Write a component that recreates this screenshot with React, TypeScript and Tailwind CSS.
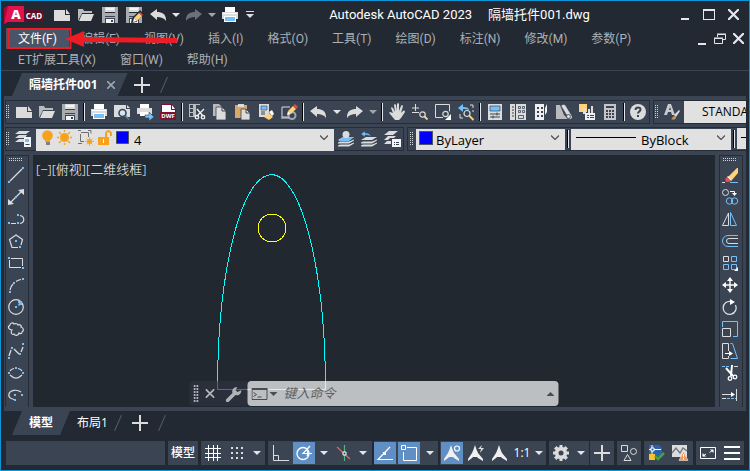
import type { ReactNode } from "react";
import clsx from "clsx";

const L = "#dcdcdc";
const B = "#74c0fc";
const Y = "#ffd27a";
const D = "#3b4453";

const floppy = (
  <>
    <path d="M0 0h3v6h10V0h3v16H0z" fill="#a8abb0" />
    <path d="M3 0h10v5H3z" fill={L} />
    <path d="M4 1h8v2H4z" fill="#f4f4f4" />
    <path d="M3 9h10v1H3z" fill={D} />
    <path d="M3 11h10v5H3z" fill={D} />
    <path d="M4 12h8v4H4z" fill="#f4f4f4" />
    <path d="M9 13h2v2H9z" fill={D} />
  </>
);

const printer = (
  <>
    <path d="M3 0h10v5H3z" fill="#fff" />
    <path d="M0 5h16v7h-2V9H2v3H0z" fill={L} />
    <path d="M1 6h14v1H1z" fill="#fff" />
    <path d="M2 9h12v6H2z" fill="#fff" />
    <path d="M3 10h10v4H3z" fill={B} />
  </>
);

const scissors = (
  <g stroke="#f0f0f0" fill="none" strokeWidth="1.4">
    <path d="M8 5l6 7M15 5l-7 7" />
    <circle cx="14" cy="13.2" r="1.7" />
    <circle cx="8" cy="13.2" r="1.7" />
  </g>
);

const layers = (
  <path d="M5 6h11l-5 3H0zM0 11.500l2-1h9l5-2v1l-5 3H0zM0 14.500l2-1h9l5-2v1l-5 3H0z" fill={L} />
);

const annotative = (
  <path d="M7 0c1 3 2 6 3 8l5 6v2l-5-3-1-1H5l-1 1-4 3v-2l4-6c1-2 2-5 3-8z" fill="#f0f0f0" />
);

const glyphs: Record<string, ReactNode> = {
  new: (
    <>
      <path d="M0 3h11v5h5v6H0z" fill={L} />
      <path d="M12 2l4 5h-4z" fill={L} />
    </>
  ),
  open: (
    <>
      <path d="M0 14V2h5l1 2h8v2H4z" fill="#b9bbbe" />
      <path d="M4 7h12l-3 7H1z" fill={L} />
    </>
  ),
  save: floppy,
  saveAs: (
    <>
      {floppy}
      <path d="M5 16l1-5 8-8 4 4-8 8z" fill="#222933" />
      <path d="M8 11l5-5 3 3-5 5z" fill={Y} />
      <path d="M13 6l1-1 3 3-1 1z" fill="#e04a4a" />
      <path d="M7 15l1-4 3 3z" fill="#fff" />
    </>
  ),
  undo: <path d="M0 7l7-5v3c5 0 9 2 9 8v1c-2-3-5-4-9-4v3z" fill={L} />,
  redo: <path d="M16 7L9 2v3C4 5 0 7 0 13v1c2-3 5-4 9-4v3z" fill={L} />,
  print: printer,
  preview: (
    <>
      <path d="M0 1h12v4h4v8H0z" fill={L} />
      <path d="M13 1l3 3h-3z" fill={L} />
      <circle cx="8.500" cy="9" r="3.500" fill="#cfe6f7" stroke={D} strokeWidth="1.600" />
      <path d="M11 12l4 4" stroke={D} strokeWidth="2.400" />
      <path d="M11.500 12l3.500 3.500" stroke={B} strokeWidth="1" />
    </>
  ),
  plot: (
    <>
      <path d="M3 0h9v4H3z" fill="#fff" />
      <path d="M0 4h15v6H0z" fill={L} />
      <path d="M3 8h9v4H3z" fill="#fff" />
      <path d="M8 11h4V8l5 5-5 4v-3H8z" fill={B} stroke={D} strokeWidth=".6" />
    </>
  ),
  dwf: (
    <>
      <path d="M1 0h11l4 5v11H1z" fill="#7d1230" />
      <path d="M2 1h9v5h4v2H2z" fill="#fff" />
      <path d="M12 1l3 4h-3z" fill="#fff" />
      <path d="M0 8h16v7H0z" fill="#7d1230" />
      <text x="8" y="13.5" fontSize="6" fontWeight="700" textAnchor="middle" fill="#fff">
        DWF
      </text>
    </>
  ),
  cut: (
    <>
      <path d="M0 0h11v1H0zM0 4h7v1H0zM0 8h7v1H0zM0 12h5v1H0zM0 0h1v13H0zM4 1h3v12H4z" fill="#b9bbbe" />
      {scissors}
    </>
  ),
  copy: (
    <>
      <path d="M1 0h6l3 3v9H1z" fill="#b9bbbe" />
      <path d="M4 3h6l4 4v9H4z" fill={L} stroke={D} strokeWidth=".8" />
      <path d="M10 3v4h4" stroke={D} fill="none" />
    </>
  ),
  paste: (
    <>
      <path d="M0 1h12v13H0z" fill="#d9a866" />
      <path d="M3 0h6v3H3z" fill={L} />
      <path d="M6 5h5l4 4v7H6z" fill={L} stroke={D} strokeWidth=".8" />
      <path d="M11 5v4h4" stroke={D} fill="none" />
    </>
  ),
  match: (
    <>
      <path d="M1 0h10v13H1z" fill={L} />
      <path d="M3 2h6v4H3z" fill={B} stroke={D} strokeWidth=".6" />
      <path d="M3 8h4M3 10h4" stroke={D} />
      <path d="M6 13l5-4 4 4-4 3z" fill={Y} />
      <path d="M11 8l3-2 2 4-2 2z" fill="#fff" />
    </>
  ),
  blockEdit: (
    <>
      <path d="M9 3H1v10h6" fill="none" stroke={L} />
      <circle cx="11" cy="11.5" r="3.5" fill="none" stroke="#a0a8b4" strokeWidth="2" />
      <path d="M6 11l1-4 3 3z" fill="#fff" />
      <path d="M7 7l5-5 3 3-5 5z" fill={Y} />
      <path d="M12 2l2-2 3 3-2 2z" fill="#e04a4a" />
      <path d="M0 14h8" stroke={L} />
    </>
  ),
  hand: (
    <path
      d="M4 9L2 4c0-1 1-1 2 0l2 4L5 1c0-1 2-1 2 0l1 6V0c0-1 2-1 2 0v7l2-5c0-1 2-1 2 0l-2 7 2-2c1-1 2 0 2 1l-4 6-2 2H6l-5-6c-1-1-1-2 0-2z"
      fill={L}
    />
  ),
  zoomRt: (
    <>
      <path d="M0 4h7M3.5 0v7M0 8.5h7" stroke={L} />
      <circle cx="10.5" cy="10.5" r="2.7" fill="none" stroke={L} strokeWidth="1.2" />
      <path d="M12.5 12.5l3 3" stroke={Y} strokeWidth="1.8" />
    </>
  ),
  zoomWin: (
    <>
      <path d="M8 13.500H.500v-13h14v7" fill="none" stroke={L} />
      <circle cx="10.5" cy="10" r="2.7" fill="none" stroke={L} strokeWidth="1.2" />
      <path d="M16 10v6h-6z" fill="#fff" />
    </>
  ),
  zoomPrev: (
    <>
      <path d="M0 4l5-4v3c4 0 6 1 6 3-2-1-4-1-6-1v3z" fill={B} />
      <path d="M12 1h3v3M2 10v4h3M15 8V6" fill="none" stroke={L} />
      <circle cx="9" cy="9.5" r="3" fill="none" stroke={L} strokeWidth="1.2" />
      <path d="M11.5 12l4 4" stroke={Y} strokeWidth="1.8" />
    </>
  ),
  props: (
    <>
      <path d="M1 0h14v16H1z" fill={L} />
      <path d="M3 2h10v5H3z" fill={B} stroke={D} strokeWidth=".7" />
      <path d="M3 10h10M3 13h10M10 8.5v3M6 11.5v3" stroke={D} />
    </>
  ),
  designCenter: (
    <>
      <path d="M0 0h5v16H0zM6 0h10v16H6z" fill={L} />
      <path d="M2 3h2M2 6h2M2 9h2M2 12h2" stroke={D} />
      <path
        d="M8.500 2.500h2v2h-2zM12.500 2.500h2v2h-2zM8.500 6.500h2v2h-2zM12.500 6.500h2v2h-2zM8.500 11.500h5v3h-5z"
        fill="none"
        stroke={D}
        strokeWidth=".8"
      />
    </>
  ),
  palettes: (
    <>
      <path d="M2 0h9v16H2zM12 4l2-4v8l-2 3z" fill="#f0f0f0" />
      <path d="M4 3h2v2H4zM8 3h2v2H8zM4 7h2v2H4zM8 7h2v2H8zM4 11h2v2H4zM8 11h2v2H8z" fill={D} />
    </>
  ),
  sheetSet: (
    <>
      <path d="M0 1h4l4 10 4 4H0z" fill="#b9bbbe" />
      <path d="M5 2c1-2 4-2 5 0l6 10c1 2-1 4-3 3z" fill={L} stroke={D} strokeWidth=".7" />
      <circle cx="12.500" cy="12.500" r="2" fill={L} stroke={D} strokeWidth=".8" />
    </>
  ),
  markup: (
    <>
      <path d="M0 0h8v8H0z" fill={Y} />
      <path d="M4 4h3v6H4zM9 5h2v5H9zM12 2h2v8h-2z" fill={L} />
      <path d="M6 9h10v7H6z" fill="#f0f0f0" />
      <path d="M8 11.500h2M11 11.500h4M8 13.500h2M11 13.500h4" stroke={D} />
    </>
  ),
  calc: (
    <>
      <path d="M2 0h12v16H2z" fill="#c4c6c9" />
      <path
        d="M4 2h8v2H4zM4 6h2v2H4zM7 6h2v2H7zM10 6h2v2h-2zM4 9h2v2H4zM7 9h2v2H7zM10 9h2v2h-2zM4 12h2v2H4zM7 12h2v2H7zM10 12h2v2h-2z"
        fill={D}
      />
    </>
  ),
  help: (
    <>
      <circle cx="8" cy="8" r="8" fill={L} />
      <path d="M5.500 6c0-3.500 5-3 5-.5 0 2-2.500 2-2.500 4M8 11v2" fill="none" stroke={D} strokeWidth="2" />
    </>
  ),
  textStyle: (
    <>
      <path d="M0 11L4 0h3l4 11H8L7 8H4l-1 3zM5 6h2L6 3z" fill="#c9cbce" />
      <path d="M10 11l5-5 1 1-4 6z" fill={L} />
      <path d="M7 15c2 0 1-3 4-3l1 1c0 3-3 3-5 2z" fill="#c99a5b" />
    </>
  ),
  layerProps: (
    <>
      <path d="M4 0h11l-4 3H0zM4 4h8l-2 3H0zM4 8h5v3H0z" fill={L} />
      <path d="M9 6h7v10H9z" fill="#f4f4f4" />
      <path d="M10 8h4v3h-4z" fill={B} />
      <path d="M10.500 13.500h4" stroke={D} />
    </>
  ),
  layerCurrent: (
    <>
      {layers}
      <path d="M5 6h11l-5 4H0z" fill={B} />
      <circle cx="8" cy="3.500" r="3.500" fill={L} />
    </>
  ),
  layerPrev: (
    <>
      {layers}
      <path d="M0 3l4-3v2c4 0 5 1 6 4-2-2-4-2-6-2v2z" fill={B} stroke={D} strokeWidth=".5" />
    </>
  ),
  layerStates: (
    <>
      <path d="M5 0h9l-5 4H0zM4 5h8l-2 2H6L4 9H0zM3 10h4v3H0z" fill={L} />
      <path d="M8 8h9v8H8z" fill="#f4f4f4" />
      <path d="M10 11.500h1M12 11.500h3M10 13.500h1M12 13.500h3" stroke={D} />
    </>
  ),
  line: (
    <>
      <path d="M2 14L14 2" stroke={L} strokeWidth="1.200" />
      <path d="M0 14h2v2H0zM14 0h2v2h-2z" fill={B} />
    </>
  ),
  xline: (
    <>
      <path d="M2 14L14 2" stroke={L} strokeWidth="1.200" />
      <path d="M16 0v6l-6-5zM0 16v-6l6 5z" fill={L} />
      <path d="M7 7h2v2H7z" fill={B} />
    </>
  ),
  pline: (
    <>
      <path d="M3 12.500h5M12 4.500c5 1 5 7 0 8" fill="none" stroke={L} strokeWidth="1.200" />
      <path d="M0 11h2v2H0zM9 11h2v2H9zM9 3h2v2H9z" fill={B} />
    </>
  ),
  polygon: (
    <>
      <path d="M10 14.500H4L1.500 6.500 8 2l6.500 4.500L13 12" fill="none" stroke={L} strokeWidth="1.200" />
      <path d="M7 7h2v2H7zM11 13h2v2h-2z" fill={B} />
    </>
  ),
  rect: (
    <>
      <path d="M3 3.500h11.500V11M1.500 5v7.500H13" fill="none" stroke={L} />
      <path d="M0 2h2v2H0zM14 12h2v2h-2z" fill={B} />
    </>
  ),
  arc: (
    <>
      <path d="M2 13Q3 9 5 7M8 4.500Q10 3 13 2.500" fill="none" stroke={L} strokeWidth="1.200" />
      <path d="M14 1h2v2h-2zM5 5h2v2H5zM1 14h2v2H1z" fill={B} />
    </>
  ),
  circle: (
    <>
      <circle cx="8" cy="8" r="7.300" fill="none" stroke={L} strokeWidth="1.200" />
      <path d="M7 7h2v2H7zM10 2h4v4h-2L11 7l-1-1 1-2h-1z" fill={B} />
    </>
  ),
  cloud: (
    <path
      d="M4 9c-3 0-5-3-2-5 0-2 3-3 4-1 2-1 4 0 4 1 2-1 4 1 3 2 3 1 3 4 1 5 0 2-2 2-3 1-1 3-4 3-5 1-2 1-4-1-2-4z"
      fill="none"
      stroke={L}
      strokeWidth="1.200"
    />
  ),
  spline: (
    <>
      <path d="M1 13l2-6M6 6l5 5M13 9l2-5" fill="none" stroke={L} strokeWidth="1.300" />
      <path d="M0 14h2v2H0zM3 4h2v2H3zM11 10h2v2h-2zM14 0h2v2h-2z" fill={B} />
    </>
  ),
  ellipse: (
    <>
      <path d="M2 6Q3 4 6 3.500M10 3.500Q13 4 14 6M2 10q6 6 12 0" fill="none" stroke={L} strokeWidth="1.200" />
      <path d="M0 7h2v2H0zM14 7h2v2h-2zM7 2h2v2H7z" fill={B} />
    </>
  ),
  ellipseArc: (
    <>
      <path d="M13 5C9 2 2 3 1 7s3 5 5 5.500" fill="none" stroke={L} strokeWidth="1.200" />
      <path d="M6 7h2v2H6zM13 7h2v2h-2zM6 12h2v2H6z" fill={B} />
    </>
  ),
  erase: (
    <>
      <path d="M6 10l9-9h1v5l-6 7z" fill={Y} />
      <path d="M5 10l1-1 4 4-1 1z" fill="#fff" />
      <path d="M3 12l2-2 4 4-2 1H4z" fill="#ee4b4b" />
      <path d="M0 15.500h3" stroke={L} />
      <path d="M8 15.500h8" stroke={B} />
    </>
  ),
  copyObj: (
    <>
      <circle cx="3.500" cy="3.500" r="3" fill="none" stroke={L} />
      <path d="M8 2.500h4.500V5" fill="none" stroke="#fff" />
      <path d="M10 4h5l-2.500 3z" fill="#fff" />
      <circle cx="7.500" cy="12" r="3.200" fill="none" stroke={B} />
      <circle cx="12.500" cy="12" r="3.200" fill="none" stroke={B} />
    </>
  ),
  mirror: (
    <>
      <path d="M6.500 2v12.500h-6z" fill="none" stroke={L} />
      <path d="M8.500 1.500v13h6z" fill="none" stroke={B} />
    </>
  ),
  offset: (
    <>
      <path d="M16 2.500H6a5.500 5.500 0 0 0 0 11h10" fill="none" stroke={B} />
      <path d="M16 5.500H7a2.500 2.500 0 0 0 0 5h9" fill="none" stroke={L} />
    </>
  ),
  array: (
    <>
      <path d="M1.500 1.500h5v5h-5z" fill="none" stroke={L} />
      <path d="M9.500 1.500h5v5h-5zM1.500 9.500h5v5h-5zM9.500 9.500h5v5h-5z" fill="none" stroke={B} />
      <path d="M16 12v4h-4z" fill="#fff" />
    </>
  ),
  move: (
    <>
      <path d="M8 2v12M2 8h12" stroke="#fff" strokeWidth="1.400" />
      <path d="M8 0l3 4H5zM8 16l3-4H5zM0 8l4-3v6zM16 8l-4-3v6z" fill="#fff" />
    </>
  ),
  rotate: (
    <>
      <path d="M9 2.500A6.500 6.500 0 1 0 13.500 6" fill="none" stroke={L} strokeWidth="1.300" />
      <path d="M8 0l5 3-5 3z" fill="#fff" />
    </>
  ),
  scale: (
    <>
      <path d="M.5 6V.5h15v15H11" fill="none" stroke={B} />
      <path d="M.5 7.500h8v8h-8z" fill="none" stroke={L} />
    </>
  ),
  stretch: (
    <>
      <path d="M6.500 8V.5h-6v15h6V13" fill="none" stroke={L} />
      <path d="M8.500.5h2l5 15h-7" fill="none" stroke={B} />
      <path d="M3 10.500h5" stroke="#fff" />
      <path d="M7 8l4 2.500L7 13z" fill="#fff" />
    </>
  ),
  trim: (
    <>
      <path d="M0 1.500h7" stroke={B} strokeDasharray="3 1" />
      <path d="M12 1.500h4" stroke={L} />
      <path d="M4 3l7 8M10 0L9 11" stroke="#fff" strokeWidth="2" fill="none" />
      <circle cx="8" cy="13.500" r="1.800" fill="none" stroke="#fff" strokeWidth="1.300" />
      <circle cx="13" cy="12" r="1.800" fill="none" stroke="#fff" strokeWidth="1.300" />
    </>
  ),
  extend: (
    <>
      <path d="M14.500 2v12M0 7.500h10M0 11.500h4" stroke={L} />
      <path d="M9 5l4 2.500L9 10z" fill="#fff" />
      <path d="M5 11.500h9" stroke={B} strokeDasharray="3 1" />
    </>
  ),
  grid: <path d="M3.500 0v16M8.500 0v16M12.500 0v16M0 3.500h16M0 8.500h16M0 12.500h16" stroke="#fff" />,
  snap: (
    <path
      d="M2 2h2v2H2zM7 2h2v2H7zM12 2h2v2h-2zM2 7h2v2H2zM7 7h2v2H7zM12 7h2v2h-2zM2 12h2v2H2zM7 12h2v2H7zM12 12h2v2h-2z"
      fill={L}
    />
  ),
  ortho: <path d="M.5 0v15.500H16M.5 10.500h5v5" fill="none" stroke={L} />,
  polar: (
    <>
      <circle cx="7" cy="8.500" r="6" fill="none" stroke="#fff" strokeWidth="1.300" />
      <path d="M16 8.500H7L14 1M11 5.500q2 3 0 5.500" fill="none" stroke="#fff" strokeWidth="1.200" />
    </>
  ),
  iso: (
    <>
      <path d="M1 2l13 12" stroke="#d46a6a" strokeWidth="1.200" />
      <path d="M8.500 0v16" stroke="#49b87a" strokeWidth="1.200" />
      <path d="M7 7h3v3H7z" fill={D} stroke="#fff" />
    </>
  ),
  otrack: (
    <>
      <path d="M16 14.500H1L13 2" fill="none" stroke="#fff" strokeWidth="1.200" />
      <path d="M6 7h3v3H6z" fill="#fff" />
    </>
  ),
  osnap: (
    <>
      <path d="M6 2.500h9.500v13h-13V7" fill="none" stroke="#fff" />
      <path d="M.5.5h4v4h-4z" fill="none" stroke="#fff" />
    </>
  ),
  annoVis: (
    <>
      {annotative}
      <circle cx="13" cy="3.500" r="2.500" fill="none" stroke="#fff" strokeWidth="1.200" />
    </>
  ),
  annoAuto: (
    <>
      {annotative}
      <path d="M14 0l-4 4h3l-1 4 4-5h-3z" fill={L} />
    </>
  ),
  annoScale: annotative,
  gear: (
    <>
      <path
        d="M6.500 0h3v2l1.500.6L12.500 1 15 3.500 13.400 5l.6 1.500h2v3h-2l-.6 1.500 1.600 1.500-2.500 2.500-1.500-1.600-1.500.6v2h-3v-2L5 13.400 3.500 15 1 12.500 2.600 11 2 9.500H0v-3h2L2.600 5 1 3.500 3.500 1 5 2.600 6.500 2z"
        fill={L}
      />
      <circle cx="8" cy="8" r="2.500" fill={D} />
    </>
  ),
  plus: <path d="M8 0v16M0 8h16" stroke={L} strokeWidth="2" />,
  isolate: (
    <>
      <path d="M.5.5h6v6h-6zM6.500 9.500l3.500 6H3z" fill="none" stroke={L} />
      <circle cx="12.500" cy="6.500" r="3" fill="none" stroke={L} />
    </>
  ),
  hardware: (
    <>
      <path d="M0 0h10l3 3v8H0z" fill="#2b62a8" />
      <path d="M3 0v11M0 4.500h12" stroke="#fff" />
      <path d="M2 3h3v3H2z" fill="#2b62a8" stroke="#fff" />
      <path d="M0 9h6v6H0z" fill="#fdc12d" />
      <path d="M6 11l3 3 6-6" fill="none" stroke="#43a047" strokeWidth="2.600" />
    </>
  ),
  performance: (
    <>
      <path d="M0 0h15v12H0z" fill={L} />
      <path d="M0 8l4-5 4 5 3-5 4 3" fill="none" stroke="#6d7683" strokeWidth="1.300" />
      <path d="M11.500 6l4.500 9.500H7z" fill="#f0965a" stroke="#fff" strokeWidth=".5" />
      <path d="M11.500 9v3M11.500 13v1.500" stroke="#fff" />
    </>
  ),
  cleanScreen: (
    <>
      <path d="M.5 2.500h15v11H.5z" fill="none" stroke="#fff" />
      <path d="M10 4.500h3.500V8zM2.500 8v3.500H6z" fill="#fff" />
      <path d="M9.500 7.500l3-2M3 11l3-2" stroke="#fff" />
    </>
  ),
  menu: <path d="M0 2h16M0 8h16M0 14h16" stroke="#fff" strokeWidth="2" />,
};

function Glyph({ name, className }: { name: string; className?: string }) {
  return (
    <svg viewBox="0 0 16 16" className={clsx("size-4 shrink-0 overflow-visible", className)} aria-hidden="true">
      {glyphs[name]}
    </svg>
  );
}

function Tool({ name, className }: { name: string; className?: string }) {
  return (
    <button type="button" aria-label={name} className={clsx("flex shrink-0 items-center justify-center", className)}>
      <Glyph name={name} />
    </button>
  );
}

function Caret({ className, dim }: { className?: string; dim?: boolean }) {
  return (
    <button type="button" aria-label="more" className={clsx("flex shrink-0 items-center justify-center", className)}>
      <svg viewBox="0 0 8 4" className="h-1 w-2" aria-hidden="true">
        <path d="M0 0h8L4 4z" fill={dim ? "#a0a5ad" : "#e4e4e4"} />
      </svg>
    </button>
  );
}

function Grip({ horizontal }: { horizontal?: boolean }) {
  const w = horizontal ? 14 : 4;
  const h = horizontal ? 4 : 14;
  const dots = [];
  for (let x = 0; x < w; x += 2) {
    for (let y = 0; y < h; y += 2) {
      dots.push(<rect key={`${x}-${y}`} x={x} y={y} width="1" height="1" />);
    }
  }
  return (
    <svg width={w} height={h} fill="#d0d3d8" className="shrink-0" aria-hidden="true">
      {dots}
    </svg>
  );
}

function Divider() {
  return (
    <span className="flex w-1.5 shrink-0 justify-center">
      <span className="h-[18px] w-0.5 border-r border-l border-r-gray-200 border-l-black" />
    </span>
  );
}

function Chevron() {
  return (
    <svg viewBox="0 0 8 5" className="pointer-events-none absolute top-2 right-1.5 h-[5px] w-2" aria-hidden="true">
      <path d="M0 .5l4 4 4-4" fill="none" stroke="#555" strokeWidth="1.300" />
    </svg>
  );
}

function Cross({ className }: { className?: string }) {
  return (
    <svg viewBox="0 0 10 10" className={className} aria-hidden="true">
      <path d="M0 0l10 10M10 0L0 10" stroke="currentColor" strokeWidth="2" />
    </svg>
  );
}

function TabSlash() {
  return (
    <svg viewBox="0 0 8 16" className="h-4 w-2 shrink-0" aria-hidden="true">
      <path d="M7.500 0l-7 16" stroke="#4d5765" strokeWidth="1.200" />
    </svg>
  );
}

function TitleBar() {
  return (
    <header className="flex h-[27px] shrink-0 items-center pl-[3px]">
      <svg viewBox="0 0 40 18" className="h-[18px] w-10 shrink-0" role="img" aria-label="AutoCAD">
        <path d="M0 2l4-2v15l-4 3z" fill="#a8083a" />
        <path d="M4 0h16v16H4l-4 2z" fill="#e2124f" />
        <path d="M20 4h20v12H20z" fill="#5c0f29" />
        <text x="12" y="13" fontSize="13" fontWeight="800" textAnchor="middle" fill="#fff">
          A
        </text>
        <text x="30" y="13" fontSize="8" fontWeight="700" textAnchor="middle" fill="#fff">
          CAD
        </text>
      </svg>
      <div className="ml-1.5 flex h-full shrink-0">
        {["new", "open", "save", "saveAs", "undo"].map((n) => (
          <Tool key={n} name={n} className="w-6" />
        ))}
        <Caret className="w-3" />
        <Tool name="redo" className="w-6 opacity-40" />
        <Caret className="w-3" dim />
        <Tool name="print" className="w-6" />
        <button type="button" aria-label="customize" className="flex w-4 items-center justify-center">
          <svg viewBox="0 0 8 7" className="h-[7px] w-2">
            <path d="M0 0h8v1H0zM0 3h8L4 7z" fill={L} />
          </svg>
        </button>
      </div>
      <h1 className="flex min-w-0 flex-1 justify-center gap-4 pr-3 font-['Roboto','Noto_Sans_CJK_SC',sans-serif] text-[13px] whitespace-nowrap text-white">
        <span>Autodesk AutoCAD 2023</span>
        <span>隔墙托件001.dwg</span>
      </h1>
      <div className="mr-1 flex h-full shrink-0 text-gray-200">
        <button type="button" aria-label="minimize" className="flex w-6 items-end justify-center pb-2">
          <span className="h-0.5 w-2 bg-current" />
        </button>
        <button type="button" aria-label="maximize" className="flex w-6 items-center justify-center">
          <span className="h-[11px] w-3 border border-t-2 border-current" />
        </button>
        <button type="button" aria-label="close" className="flex w-6 items-center justify-center">
          <Cross className="size-[11px]" />
        </button>
      </div>
    </header>
  );
}

const menus = [
  "文件(F)",
  "编辑(E)",
  "视图(V)",
  "插入(I)",
  "格式(O)",
  "工具(T)",
  "绘图(D)",
  "标注(N)",
  "修改(M)",
  "参数(P)",
  "ET扩展工具(X)",
  "窗口(W)",
  "帮助(H)",
];

function MenuBar() {
  return (
    <nav className="relative flex shrink-0 border-b border-[#3b4453] pl-[5px]">
      <ul className="flex min-w-0 flex-1 flex-wrap font-['Roboto','Noto_Sans_CJK_SC',sans-serif] text-[12px] text-[#adb1b6]">
        {menus.map((m, i) => (
          <li key={m}>
            <button type="button" className={clsx("block h-[21px] px-3", i === 0 && "bg-[#4a5467] text-white")}>
              {m}
            </button>
          </li>
        ))}
      </ul>
      <div className="mr-0.5 flex h-[21px] shrink-0 text-gray-200">
        <button type="button" aria-label="minimize drawing" className="flex w-[18px] items-end justify-center pb-1">
          <span className="h-0.5 w-2 bg-current" />
        </button>
        <button type="button" aria-label="restore drawing" className="flex w-[18px] items-center justify-center">
          <svg viewBox="0 0 12 11" className="h-[11px] w-3" fill="none" stroke="currentColor">
            <path d="M3.500 4V1.500h8v5H9M3 1h9M.5 5.500h8v5h-8zM0 5h9" />
          </svg>
        </button>
        <button type="button" aria-label="close drawing" className="flex w-[18px] items-center justify-center">
          <Cross className="size-[11px]" />
        </button>
      </div>
      {/* callout on the file menu */}
      <svg viewBox="0 0 180 24" className="pointer-events-none absolute -top-px left-0 h-6 w-[180px]" aria-hidden="true">
        <path d="M7.500 2h62v19h-62z" fill="none" stroke="#ee1c25" strokeWidth="2" />
        <path d="M64 12l19-8v6l92 1q3 2 0 5l-92-1v5z" fill="#ee1c25" />
      </svg>
    </nav>
  );
}

const slant = "[clip-path:polygon(10px_0,100%_0,calc(100%-10px)_100%,0_100%)]";

function FileTabs() {
  return (
    <div className="flex h-[25px] shrink-0 items-end pl-[11px]">
      <div className={clsx("flex h-[23px] items-center bg-[#3b4453] pr-3 pl-[17px] text-white", slant)}>
        <button type="button" className="text-[12px] font-bold">
          隔墙托件001
        </button>
        <button type="button" aria-label="close tab" className="ml-2 p-px text-[#a0a5ad]">
          <Cross className="size-2" />
        </button>
      </div>
      <div className="flex h-[23px] items-center gap-2.5 pl-1.5">
        <button type="button" aria-label="new tab" className="flex">
          <Glyph name="plus" className="size-3" />
        </button>
        <TabSlash />
      </div>
    </div>
  );
}

const bar = "flex h-6 shrink-0 items-center border border-[#262d38]";
const field = "h-[22px] w-full appearance-none rounded-none bg-[#e1e1e1] text-black outline-none";

function StandardToolbar() {
  const groups = [
    ["new", "open", "save"],
    ["print", "preview", "plot", "dwf"],
    ["cut", "copy", "paste", "match", "blockEdit"],
  ];
  return (
    <div className="flex gap-[3px]">
      <div className={bar}>
        <Grip />
        <div className="ml-0.5 flex items-center">
          {groups.map((g) => (
            <div key={g[0]} className="flex items-center">
              {g.map((n) => (
                <Tool key={n} name={n} className="w-[23px]" />
              ))}
              <Divider />
            </div>
          ))}
          <Tool name="undo" className="w-6" />
          <Caret className="w-[13px]" />
          <Tool name="redo" className="w-[23px]" />
          <Caret className="w-[13px]" dim />
          <Divider />
          {["hand", "zoomRt", "zoomWin", "zoomPrev"].map((n) => (
            <Tool key={n} name={n} className="w-[23px]" />
          ))}
          <Divider />
          {["props", "designCenter", "palettes", "sheetSet", "markup", "calc"].map((n) => (
            <Tool key={n} name={n} className="w-[23px]" />
          ))}
          <Divider />
          <Tool name="help" className="w-[22px]" />
        </div>
      </div>
      <div className={clsx(bar, "min-w-0 flex-1 overflow-hidden border-r-0 pl-px")}>
        <Grip />
        <Tool name="textStyle" className="w-[25px]" />
        <select aria-label="text style" className={clsx(field, "min-w-0 flex-1 pl-[18px] text-[12px]")}>
          <option>STANDARD</option>
        </select>
      </div>
    </div>
  );
}

function LayerToolbar() {
  return (
    <div className="mt-[3px] flex gap-[3px]">
      <div className={clsx(bar, "min-w-0 flex-1")}>
        <Grip />
        <Tool name="layerProps" className="w-[26px]" />
        <div className="relative min-w-0 flex-1">
          <select aria-label="layer" className={clsx(field, "pl-[98px] text-[13px]")}>
            <option>4</option>
          </select>
          <svg viewBox="0 0 90 16" className="pointer-events-none absolute top-[3px] left-1.5 h-4 w-[90px]" aria-hidden="true">
            <circle cx="5.500" cy="5.500" r="5.300" fill="#f9a11b" />
            <path d="M3 9h5v3H3z" fill="#f9a11b" />
            <path d="M4 12h4v3H4z" fill="#808080" />
            <circle cx="22.500" cy="7.500" r="4.500" fill="#f9a11b" />
            <path
              d="M22.500 0v2M22.500 13v2M15 7.500h2M28 7.500h2M17 2l2 2M28 2l-2 2M17 13l2-2M28 13l-2-2"
              stroke="#f9a11b"
              strokeWidth="1.400"
            />
            <path d="M39 2.500h7.500V7M38.500 4v7.500H42M36 .5h3M46 .5h3v3M36 13.500h4" fill="none" stroke="#707070" />
            <circle cx="47.500" cy="11.500" r="2.500" fill="#f9a11b" />
            <path d="M47.500 7v9M43 11.500h9M44.500 8.500l6 6M50.500 8.500l-6 6" stroke="#f9a11b" strokeWidth=".8" />
            <path d="M56 7h11v8H56z" fill="#f9a11b" />
            <path d="M64 7V3q2-4 5 0v3" fill="none" stroke="#f9a11b" strokeWidth="2" />
            <path d="M61 9h1v4h-1z" fill="#fff" />
            <path d="M74.500 1.500h12v12h-12z" fill="#00f" stroke="#555" />
          </svg>
          <Chevron />
        </div>
        {["layerCurrent", "layerPrev", "layerStates"].map((n) => (
          <Tool key={n} name={n} className="w-[23px]" />
        ))}
      </div>
      <div className={clsx(bar, "w-[339px] overflow-hidden border-r-0 pl-0.5")}>
        <Grip />
        <div className="relative ml-0.5 w-[149px] shrink-0">
          <select aria-label="color" className={clsx(field, "pl-5 text-[13px]")}>
            <option>ByLayer</option>
          </select>
          <span className="pointer-events-none absolute top-1 left-[3px] size-3.5 border border-gray-600 bg-[#0000ff]" />
          <Chevron />
        </div>
        <Divider />
        <div className="relative w-[160px] shrink-0">
          <select aria-label="linetype" className={clsx(field, "pl-[70px] text-[13px]")}>
            <option>ByBlock</option>
          </select>
          <span className="pointer-events-none absolute top-2.5 left-[5px] h-px w-[60px] bg-black" />
          <Chevron />
        </div>
        <Divider />
        <div className="relative min-w-0 flex-1">
          <select aria-label="lineweight" className={field}>
            <option label=" " />
          </select>
          <span className="pointer-events-none absolute top-2.5 right-0 left-1 h-px bg-black" />
        </div>
      </div>
    </div>
  );
}

const drawTools = ["line", "xline", "pline", "polygon", "rect", "arc", "circle", "cloud", "spline", "ellipse", "ellipseArc"];
const modifyTools = ["erase", "copyObj", "mirror", "offset", "array", "move", "rotate", "scale", "stretch", "trim", "extend"];

function SideToolbar({ tools }: { tools: string[] }) {
  return (
    <div className="flex w-6 shrink-0 flex-col items-center border border-b-0 border-[#262d38] pr-0.5">
      <div className="flex h-2 items-center">
        <Grip horizontal />
      </div>
      {tools.map((t) => (
        <Tool key={t} name={t} className="h-[22px] w-5" />
      ))}
    </div>
  );
}

function CommandLine() {
  return (
    <div className="absolute bottom-px left-1/2 flex h-[25px] w-[369px] -translate-x-1/2">
      <div className="flex w-[58px] items-center rounded-l-sm bg-[#2f3542]/60 pl-1 text-[#b0b2b5]">
        <svg width="5" height="17" fill="currentColor" aria-hidden="true">
          {[0, 3, 6, 9, 12, 15].map((y) => (
            <path key={y} d={`M0 ${y}h2v2H0zM3 ${y}h2v2H3z`} />
          ))}
        </svg>
        <button type="button" aria-label="close command line" className="ml-[7px]">
          <Cross className="size-[9px]" />
        </button>
        <button type="button" aria-label="customize command line" className="ml-[11px]">
          <svg viewBox="0 0 16 16" className="size-4" aria-hidden="true">
            <path d="M0 14l7-7c-1-3 1-6 5-6L10 4l2 2 4-2c0 4-3 6-6 5l-7 7H1z" fill="currentColor" />
          </svg>
        </button>
      </div>
      <div className="flex min-w-0 flex-1 items-center rounded-sm bg-white/70 px-1">
        <svg viewBox="0 0 26 12" className="h-3 w-[26px] shrink-0" aria-hidden="true">
          <path d="M.5 1h15v10.500H.5z" fill="none" stroke="#4c4c4c" />
          <path d="M0 0h16v2H0z" fill="#4c4c4c" />
          <path d="M2 4.500l3 2-3 2M6 9h4" fill="none" stroke="#4c4c4c" />
          <path d="M18 4h8l-4 4z" fill="#4c4c4c" />
        </svg>
        <input
          aria-label="command"
          placeholder="键入命令"
          className="ml-1.5 min-w-0 flex-1 bg-transparent text-[13px] italic outline-none placeholder:text-[#5f6062]"
        />
        <button type="button" aria-label="history">
          <svg viewBox="0 0 8 4" className="h-1 w-2">
            <path d="M0 4h8L4 0z" fill="#4c4c4c" />
          </svg>
        </button>
      </div>
    </div>
  );
}

function DrawingArea() {
  return (
    <main className="relative mx-1 min-w-0 flex-1 overflow-hidden bg-[#212830]">
      <div className="pt-1.5 pl-[3px] text-[13px] leading-4 font-light text-white">[−][俯视][二维线框]</div>
      <svg className="absolute inset-0 size-full" fill="none" aria-hidden="true">
        <g shapeRendering="crispEdges">
          <path d="M184.500 234.500a54 215 0 0 1 108 0z" stroke="#00ffff" />
          <circle cx="239" cy="73" r="14" stroke="#ffff00" />
        </g>
      </svg>
      <CommandLine />
    </main>
  );
}

function LayoutTabs() {
  return (
    <div className="flex h-[30px] shrink-0 items-start pl-[11px] text-[12px] text-white">
      <button type="button" className={clsx("h-6 bg-[#3b4453] px-[17px] font-bold", slant)}>
        模型
      </button>
      <button type="button" className="ml-[7px] h-6">
        布局1
      </button>
      <div className="ml-1.5 flex h-6 items-center gap-2.5">
        <TabSlash />
        <button type="button" aria-label="new layout" className="flex">
          <Glyph name="plus" className="size-3" />
        </button>
        <TabSlash />
      </div>
    </div>
  );
}

function StatusGroup({ children, className }: { children?: ReactNode; className?: string }) {
  return <div className={clsx("flex h-6 shrink-0 items-center bg-[#3b4453]", className)}>{children}</div>;
}

function StatusBar() {
  const on = "h-[22px] w-[22px] bg-[#5f8fc4]";
  return (
    <footer className="mb-[5px] flex shrink-0 gap-[3px] pr-[5px] pl-[5px] text-[12px] text-white">
      <div className="h-6 min-w-0 flex-1 bg-[#3b4453]" />
      <StatusGroup>
        <button type="button" className="w-[30px] font-medium">
          模型
        </button>
      </StatusGroup>
      <StatusGroup>
        <Tool name="grid" className="w-6" />
        <Tool name="snap" className="w-6" />
        <Caret className="w-4" />
      </StatusGroup>
      <div className="flex shrink-0 gap-0.5">
        <StatusGroup>
          <Tool name="ortho" className="w-[25px]" />
          <Tool name="polar" className={on} />
          <Caret className="w-[18px]" />
          <Tool name="iso" className="w-[21px]" />
          <Caret className="w-[18px]" />
        </StatusGroup>
        <StatusGroup className="gap-0.5">
          <Tool name="otrack" className={on} />
          <Tool name="osnap" className={on} />
          <Caret className="w-4" />
        </StatusGroup>
        <StatusGroup className="pl-px">
          <Tool name="annoVis" className={on} />
          <Tool name="annoAuto" className="w-[25px]" />
          <Tool name="annoScale" className="w-6" />
          <button type="button" className="w-5 text-center">
            1:1
          </button>
          <Caret className="w-[14px]" />
        </StatusGroup>
      </div>
      <div className="flex shrink-0 gap-px">
        <StatusGroup>
          <Tool name="gear" className="w-6" />
          <Caret className="w-4" />
        </StatusGroup>
        <StatusGroup>
          <Tool name="plus" className="w-6" />
        </StatusGroup>
      </div>
      <StatusGroup>
        <Tool name="isolate" className="w-6" />
      </StatusGroup>
      <StatusGroup className="px-px">
        <Tool name="hardware" className="w-[23px]" />
        <Tool name="performance" className="w-6" />
      </StatusGroup>
      <StatusGroup>
        <Tool name="cleanScreen" className="w-6" />
        <Tool name="menu" className="w-6" />
      </StatusGroup>
    </footer>
  );
}

export default function App() {
  return (
    <div className="flex h-screen flex-col overflow-hidden border border-[#0a96d8] bg-[#222933] font-['Open_Sans','Noto_Sans_CJK_SC',sans-serif]">
      <TitleBar />
      <MenuBar />
      <FileTabs />
      <div className="mx-[3px] flex min-h-0 flex-1 flex-col bg-[#3b4453] pt-1 pb-1 pl-px">
        <StandardToolbar />
        <LayerToolbar />
        <div className="mt-1 flex min-h-0 flex-1 overflow-hidden pr-[3px]">
          <SideToolbar tools={drawTools} />
          <DrawingArea />
          <SideToolbar tools={modifyTools} />
        </div>
      </div>
      <LayoutTabs />
      <StatusBar />
    </div>
  );
}
